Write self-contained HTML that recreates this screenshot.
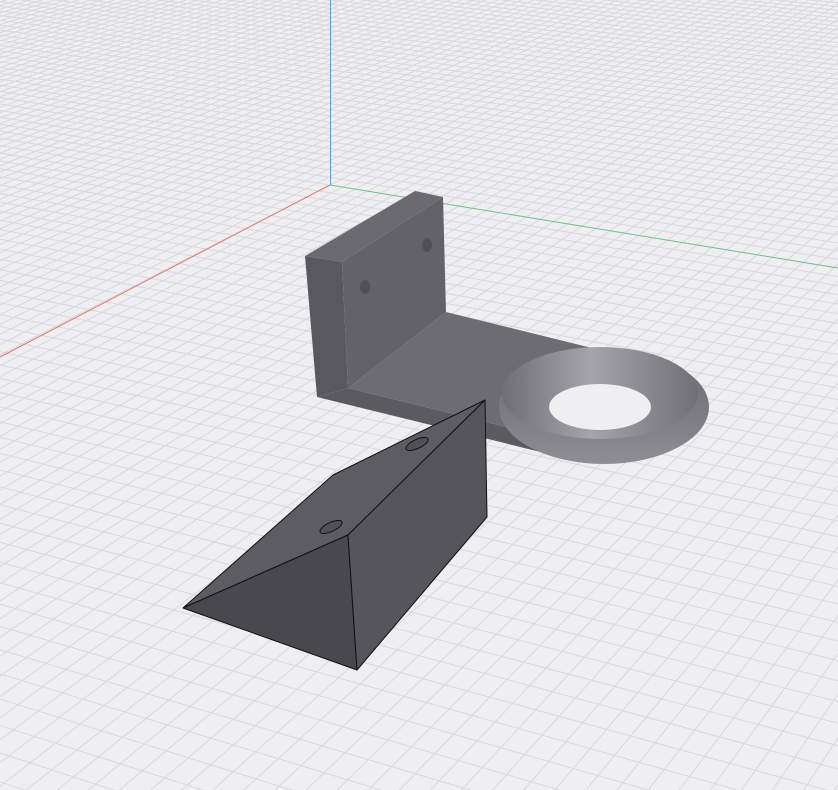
<!DOCTYPE html>
<html><head><meta charset="utf-8"><style>
html,body{margin:0;padding:0;width:838px;height:790px;overflow:hidden;background:#efeff2}
svg{position:absolute;left:0;top:0;overflow:hidden}
</style></head><body>
<svg id="s" width="838" height="790" viewBox="0 0 838 790">
<defs>
<linearGradient id="ring" x1="0" y1="0" x2="1" y2="0">
<stop offset="0" stop-color="#6e6e74"/><stop offset="0.45" stop-color="#a4a4aa"/><stop offset="1" stop-color="#707076"/>
</linearGradient>
<linearGradient id="ring2" x1="0" y1="0" x2="0" y2="1">
<stop offset="0" stop-color="#6a6a70"/><stop offset="0.6" stop-color="#7d7d83"/><stop offset="1" stop-color="#8e8e94"/>
</linearGradient>
</defs>
<g id="grid" stroke="#d8d8dd" stroke-width="1"></g>
<line x1="330.5" y1="0" x2="330.5" y2="185" stroke="#5b9bea" stroke-width="1"/>
<line x1="330" y1="185" x2="0" y2="357" stroke="#e07a78" stroke-width="1"/>
<line x1="330" y1="185" x2="838" y2="268" stroke="#6cc58a" stroke-width="1"/>

<polygon points="317,397 348,388 547,437 553,455" fill="#5a5a60"/>
<polygon points="348,388 446,312 600,350 547,437" fill="#6c6c72"/>
<ellipse cx="604" cy="407" rx="105" ry="57" fill="url(#ring2)"/>
<ellipse cx="600" cy="393" rx="98" ry="46" fill="url(#ring)"/>
<ellipse cx="600" cy="407" rx="51" ry="23" fill="#efeff2"/>
<polygon points="305,256 342,262 348,388 317,397" fill="#58585e"/>
<polygon points="342,262 443,197 446,312 348,388" fill="#626268"/>
<polygon points="305,256 415,191 443,197 342,262" fill="#6a6a70"/>
<ellipse cx="365" cy="287" rx="5" ry="7" fill="#505056"/>
<ellipse cx="427" cy="245" rx="5" ry="7" fill="#505056"/>

<g stroke="#111" stroke-width="1" stroke-linejoin="round">
<polygon points="485,400 333,475 183,608 348,535" fill="#5c5c62"/>
<polygon points="183,608 348,535 357,670" fill="#48484e"/>
<polygon points="348,535 485,400 487,517 357,670" fill="#55555b"/>
<ellipse cx="331" cy="527" rx="12" ry="4.5" transform="rotate(-25 331 527)" fill="#505056"/>
<ellipse cx="417" cy="444" rx="12" ry="4.5" transform="rotate(-25 417 444)" fill="#505056"/>
</g>
</svg>
<script>
(function(){
var g=document.getElementById('grid');
var O=[330,185],VR=[1650,-495],VG=[-3835,-495];
var a=-0.0086,b=-0.003;
function P(x,y){var w=a*x+b*y+1;return[(a*x*VR[0]+b*y*VG[0]+O[0])/w,(a*x*VR[1]+b*y*VG[1]+O[1])/w];}
var xs=-350,xe=112,ys=-800,ye=325;
var s='';
for(var x=xs;x<=xe;x++){var p=P(x,ys),q=P(x,Math.min(ye,(-0.985-a*x)/b));s+='<line x1="'+p[0]+'" y1="'+p[1]+'" x2="'+q[0]+'" y2="'+q[1]+'"/>';}
for(var y=ys;y<=ye;y++){var p=P(xs,y),q=P(Math.min(xe,(-0.985-b*y)/a),y);s+='<line x1="'+p[0]+'" y1="'+p[1]+'" x2="'+q[0]+'" y2="'+q[1]+'"/>';}
g.innerHTML=s;
})();
</script>
</body></html>
